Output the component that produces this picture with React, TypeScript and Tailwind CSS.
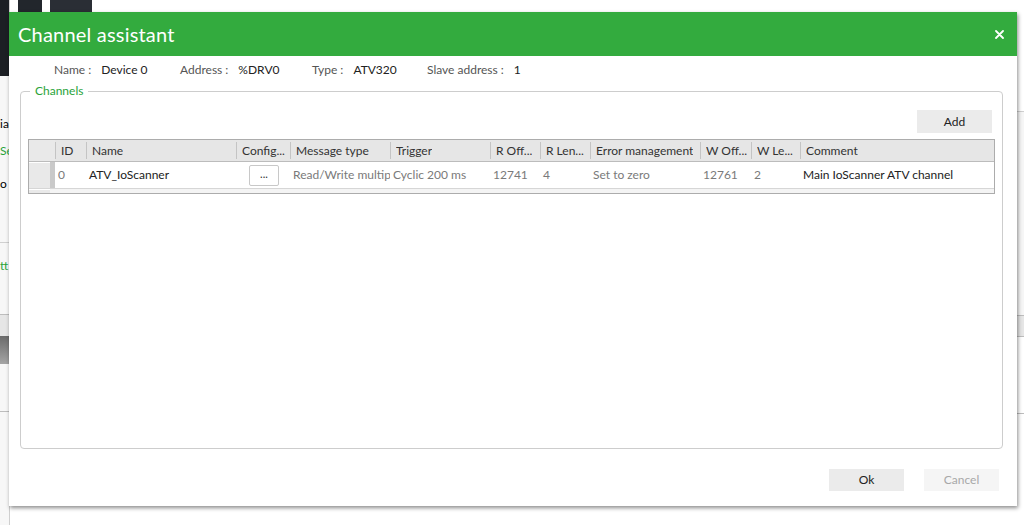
import React from 'react'

// ─────────────────────────────────────────────────────────────
// Data
// ─────────────────────────────────────────────────────────────

const COLUMNS = [
  { key: 'id', label: 'ID', width: 'w-[31px]' },
  { key: 'name', label: 'Name', width: 'w-[150px]' },
  { key: 'config', label: 'Config...', width: 'w-[54px]' },
  { key: 'msg', label: 'Message type', width: 'w-[100px]' },
  { key: 'trigger', label: 'Trigger', width: 'w-[100px]' },
  { key: 'roff', label: 'R Off...', width: 'w-[50px]' },
  { key: 'rlen', label: 'R Len...', width: 'w-[50px]' },
  { key: 'err', label: 'Error management', width: 'w-[110px]' },
  { key: 'woff', label: 'W Off...', width: 'w-[51px]' },
  { key: 'wlen', label: 'W Le...', width: 'w-[49px]' },
  { key: 'comment', label: 'Comment', width: 'flex-1' },
]

const FONT = "font-['Lato','Noto_Sans',sans-serif]"

// ─────────────────────────────────────────────────────────────
// Backdrop - bits of the application behind the dialog
// ─────────────────────────────────────────────────────────────

function Backdrop() {
  return (
    <div className="absolute inset-0">
      {/* left strip */}
      <div className="absolute left-0 top-0 w-[10px] h-[525px] border-r border-[#cfcfcf] bg-[#f7f7f7]">
        <div className="h-[76px] bg-[#1c1f24]" />
        <div className="h-[40px]" />
        <div className="text-[12px] leading-[16px] text-black">ia</div>
        <div className="h-[11px]" />
        <div className="text-[12px] leading-[16px] text-[#2aa33a]">Se</div>
        <div className="h-[17px]" />
        <div className="text-[12px] leading-[16px] text-black">o</div>
        <div className="h-[51px] border-b border-[#d0d0d0]" />
        <div className="h-[15px]" />
        <div className="text-[12px] leading-[16px] text-[#2aa33a]">tt</div>
        <div className="h-[41px] border-b border-[#bdbdbd]" />
        <div className="h-[21px] bg-[#e6e6e6]" />
        <div className="h-[28px] bg-gradient-to-b from-[#6b6b6b] to-[#a5a5a5]" />
        <div className="h-[48px] border-b border-[#bdbdbd]" />
      </div>
      <div className="absolute left-[18px] top-0 w-[24px] h-[12px] bg-[#22262c]" />
      <div className="absolute left-[50px] top-0 w-[42px] h-[12px] bg-[#2a2e35]" />
      {/* right strip */}
      <div className="absolute right-0 top-0 w-[8px] h-[525px]">
        <div className="h-[112px] border-b border-[#cfcfcf]" />
        <div className="h-[203px] bg-[#f6f6f6]" />
        <div className="h-[22px] bg-[#e6e6e6] border-y border-[#bdbdbd]" />
        <div className="h-[77px] border-b border-[#bdbdbd]" />
      </div>
    </div>
  )
}

// ─────────────────────────────────────────────────────────────
// Grid
// ─────────────────────────────────────────────────────────────

function Cell({ w, children, dark }: { w: string; children: React.ReactNode; dark?: boolean }) {
  return (
    <div
      className={`${w} flex items-center pl-[3px] whitespace-nowrap overflow-hidden ${dark ? 'text-[#222]' : 'text-[#7a7a7a]'}`}
    >
      {children}
    </div>
  )
}

function ChannelsGrid() {
  return (
    <div className="mx-[7px] border border-[#acacac] bg-[#f0f0f0] text-[12px]">
      {/* header */}
      <div className="flex h-[22px] bg-[#e6e6e6] border-b border-[#bcbcbc]">
        <div className="w-[26px] bg-[#e9e9e9]" />
        {COLUMNS.map((c) => (
          <div key={c.key} className={`${c.width} flex items-center border-l border-[#c4c4c4] my-[2px] pl-[5px] text-[#333]`}>
            <span className="truncate">{c.label}</span>
          </div>
        ))}
      </div>
      {/* row */}
      <div className="flex h-[27px] bg-white border-b border-[#d6d6d6]">
        <div className="w-[21px] bg-[#e9e9e9] border-t border-white" />
        <div className="w-[5px] bg-[#c9c9c9]" />
        <Cell w="w-[31px]">0</Cell>
        <Cell w="w-[150px]" dark>
          ATV_IoScanner
        </Cell>
        <div className="w-[54px] flex items-center pl-[13px]">
          <div className="w-[30px] h-[21px] border border-[#c8c8c8] rounded-[2px] bg-white flex items-center justify-center text-[#333] text-[11px] leading-none pb-[4px]">
            ...
          </div>
        </div>
        <Cell w="w-[100px]">Read/Write multiple</Cell>
        <Cell w="w-[100px]">Cyclic 200 ms</Cell>
        <Cell w="w-[50px]">12741</Cell>
        <Cell w="w-[50px]">4</Cell>
        <Cell w="w-[110px]">Set to zero</Cell>
        <Cell w="w-[51px]">12761</Cell>
        <Cell w="w-[49px]">2</Cell>
        <Cell w="flex-1" dark>
          Main IoScanner ATV channel
        </Cell>
      </div>
      <div className="flex h-[4px]">
        <div className="w-[21px] bg-[#e9e9e9] border-t border-white" />
        <div className="flex-1 bg-[#f4f4f4]" />
      </div>
    </div>
  )
}

// ─────────────────────────────────────────────────────────────
// Dialog
// ─────────────────────────────────────────────────────────────

function InfoItem({ label, value, w }: { label: string; value: string; w: string }) {
  return (
    <div className={`${w} flex items-center`}>
      <span className="text-[#555]">{label}</span>
      <span className="ml-[10px] text-[#222]">{value}</span>
    </div>
  )
}

function ChannelAssistant() {
  return (
    <div className="absolute left-[9px] top-[12px] w-[1008px] h-[494px] bg-white shadow-[1px_2px_4px_rgba(0,0,0,0.45)] flex flex-col">
      {/* header */}
      <div className="h-[44px] bg-[#33ab3e] flex items-center justify-between pl-[9px] pr-[13px]">
        <span className="text-white text-[20px] tracking-[0.2px]">Channel assistant</span>
        <svg width="9" height="9" viewBox="0 0 9 9" className="mt-[1px]">
          <path d="M1 1 L8 8 M8 1 L1 8" stroke="white" strokeWidth="1.8" strokeLinecap="round" />
        </svg>
      </div>

      {/* device info */}
      <div className="flex items-center h-[26px] pl-[45px] text-[12px] pt-[1px]">
        <InfoItem w="w-[126px]" label="Name :" value="Device 0" />
        <InfoItem w="w-[132px]" label="Address :" value="%DRV0" />
        <InfoItem w="w-[115px]" label="Type :" value="ATV320" />
        <InfoItem w="w-[120px]" label="Slave address :" value="1" />
      </div>

      {/* channels fieldset */}
      <fieldset className="ml-[11px] mr-[14px] mt-[2px] h-[365px] border border-[#cdcdcd] rounded-[4px] px-0 pb-0 pt-[12px] min-w-0">
        <legend className="ml-[9px] px-[5px] text-[12px] text-[#2aa33a] leading-[14px]">Channels</legend>
        <div className="flex justify-end pr-[10px]">
          <button className="w-[75px] h-[23px] bg-[#ebebeb] text-[12px] text-[#222]">Add</button>
        </div>
        <div className="h-[6px]" />
        <ChannelsGrid />
      </fieldset>

      {/* footer */}
      <div className="flex-1 flex items-center justify-end gap-[20px] pr-[18px] pt-[4px]">
        <button className="w-[75px] h-[22px] bg-[#ebebeb] text-[12px] text-[#222]">Ok</button>
        <button className="w-[75px] h-[22px] bg-[#f5f5f5] text-[12px] text-[#a8a8a8]">Cancel</button>
      </div>
    </div>
  )
}

export default function App() {
  return (
    <div className={`relative w-[1024px] h-[525px] overflow-hidden bg-white ${FONT}`}>
      <Backdrop />
      <ChannelAssistant />
    </div>
  )
}
